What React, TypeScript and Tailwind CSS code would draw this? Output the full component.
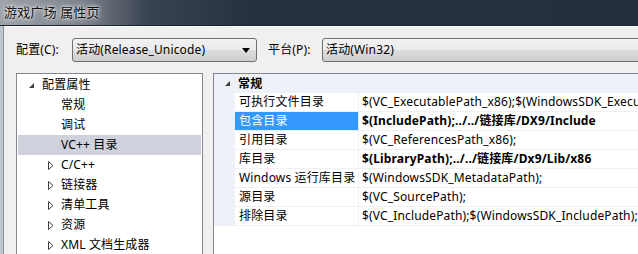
import * as React from 'react';

const font = { fontFamily: '"Noto Sans", "Noto Sans CJK SC", sans-serif' };

const treeRows: { label: string; level: number; kind: 'open' | 'closed' | 'leaf'; selected?: boolean }[] = [
    { label: '配置属性', level: 0, kind: 'open' },
    { label: '常规', level: 1, kind: 'leaf' },
    { label: '调试', level: 1, kind: 'leaf' },
    { label: 'VC++ 目录', level: 1, kind: 'leaf', selected: true },
    { label: 'C/C++', level: 1, kind: 'closed' },
    { label: '链接器', level: 1, kind: 'closed' },
    { label: '清单工具', level: 1, kind: 'closed' },
    { label: '资源', level: 1, kind: 'closed' },
    { label: 'XML 文档生成器', level: 1, kind: 'closed' },
];

const props: { name: string; value: string; bold?: boolean; selected?: boolean }[] = [
    { name: '可执行文件目录', value: '$(VC_ExecutablePath_x86);$(WindowsSDK_ExecutablePath);$(VS_ExecutablePath)' },
    { name: '包含目录', value: '$(IncludePath);../../链接库/DX9/Include', bold: true, selected: true },
    { name: '引用目录', value: '$(VC_ReferencesPath_x86);' },
    { name: '库目录', value: '$(LibraryPath);../../链接库/Dx9/Lib/x86', bold: true },
    { name: 'Windows 运行库目录', value: '$(WindowsSDK_MetadataPath);' },
    { name: '源目录', value: '$(VC_SourcePath);' },
    { name: '排除目录', value: '$(VC_IncludePath);$(WindowsSDK_IncludePath);$(MSBuild_ExecutablePath)' },
];

function OpenArrow() {
    return (
        <svg width="7" height="7" viewBox="0 0 7 7">
            <path d="M6 1 L6 6 L1 6 Z" fill="#404040" />
        </svg>
    );
}

function ClosedArrow() {
    return (
        <svg width="6" height="9" viewBox="0 0 6 9">
            <path d="M0.5 0.5 L5 4.5 L0.5 8.5 Z" fill="none" stroke="#404040" strokeWidth="1" />
        </svg>
    );
}

function Combo({ text, width, arrow }: { text: string; width: string; arrow?: boolean }) {
    return (
        <div className={`${width} h-[24px] shrink-0 rounded-[3px] border border-[#707070] bg-[linear-gradient(#f2f2f2_0%,#ebebeb_50%,#dddddd_50%,#cfcfcf_100%)] flex items-center pl-[3px] pr-[6px]`}>
            <span className="flex-1 text-[12px] text-black whitespace-nowrap">{text}</span>
            {arrow && (
                <svg width="8" height="5" viewBox="0 0 8 5">
                    <path d="M0 0 L8 0 L4 5 Z" fill="#000" />
                </svg>
            )}
        </div>
    );
}

export default function App() {
    return (
        <div className="w-[638px] h-[254px] overflow-hidden bg-[#f0f0f0] flex flex-col tracking-[0.15px]" style={font}>
            {/* 标题栏 */}
            <div className="h-[26px] shrink-0 bg-[linear-gradient(90deg,#9da3a9_0%,#7b828b_13%,#3a4451_23%,#27313d_40%,#26303c_100%)] border-b border-[#1c232b] flex items-center pl-[4px]">
                <span className="text-[13px] text-[#111] [text-shadow:0_0_6px_#ffffff,0_0_3px_#ffffff]">游戏广场 属性页</span>
            </div>

            <div className="flex-1 flex min-h-0">
                {/* 窗框 */}
                <div className="w-[4px] shrink-0 bg-[#bfc5cc] border-r border-[#8a9097]" />

                <div className="flex-1 min-w-0 flex flex-col border-t border-[#ffffff]">
                    {/* 配置 / 平台 */}
                    <div className="h-[46px] shrink-0 flex items-center pl-[12px]">
                        <span className="text-[12px] text-black w-[56px] shrink-0">配置(C):</span>
                        <Combo text="活动(Release_Unicode)" width="w-[185px]" arrow />
                        <span className="text-[12px] text-black ml-[11px] w-[54px] shrink-0">平台(P):</span>
                        <Combo text="活动(Win32)" width="w-[340px]" />
                    </div>

                    <div className="flex-1 flex min-h-0">
                        {/* 树 */}
                        <div className="ml-[12px] w-[187px] shrink-0 bg-white border border-[#828790] border-b-0 pt-[1px] px-[1px]">
                            {treeRows.map((r) => (
                                <div
                                    key={r.label}
                                    className={`h-[20px] flex items-center text-[12px] text-black ${r.selected ? 'bg-[#cfd2dd]' : ''}`}
                                >
                                    {r.level === 0 ? (
                                        <>
                                            <span className="w-[24px] shrink-0 flex justify-end pr-[7px]"><OpenArrow /></span>
                                            <span>{r.label}</span>
                                        </>
                                    ) : (
                                        <>
                                            <span className="w-[43px] shrink-0 flex justify-end pr-[7px]">
                                                {r.kind === 'closed' && <ClosedArrow />}
                                            </span>
                                            <span>{r.label}</span>
                                        </>
                                    )}
                                </div>
                            ))}
                        </div>

                        {/* 属性表 */}
                        <div className="ml-[10px] flex-1 min-w-0 bg-white border-t border-l border-[#828790] flex flex-col">
                            <div className="h-[19px] shrink-0 bg-[#eef1f7] flex items-center">
                                <span className="w-[24px] shrink-0 flex justify-center pl-[2px]"><OpenArrow /></span>
                                <span className="text-[12px] font-bold text-black">常规</span>
                            </div>
                            <div className="flex">
                                <div className="w-[21px] shrink-0 bg-[#eef1f7]" />
                                <div className="flex-1 min-w-0">
                                    {props.map((p) => (
                                        <div key={p.name} className="h-[19px] flex border-b border-[#f0f0f0]">
                                            <div
                                                className={`w-[124px] shrink-0 flex items-center pl-[4px] text-[12px] whitespace-nowrap overflow-hidden border-r border-[#f0f0f0] ${p.selected ? 'bg-[#3399ff] text-white' : 'text-black'}`}
                                            >
                                                {p.name}
                                            </div>
                                            <div className={`flex-1 min-w-0 flex items-center pl-[3px] text-[12px] text-black whitespace-nowrap overflow-hidden ${p.bold ? 'font-bold' : ''}`}>
                                                {p.value}
                                            </div>
                                        </div>
                                    ))}
                                </div>
                            </div>
                        </div>
                    </div>
                </div>
            </div>
        </div>
    );
}
